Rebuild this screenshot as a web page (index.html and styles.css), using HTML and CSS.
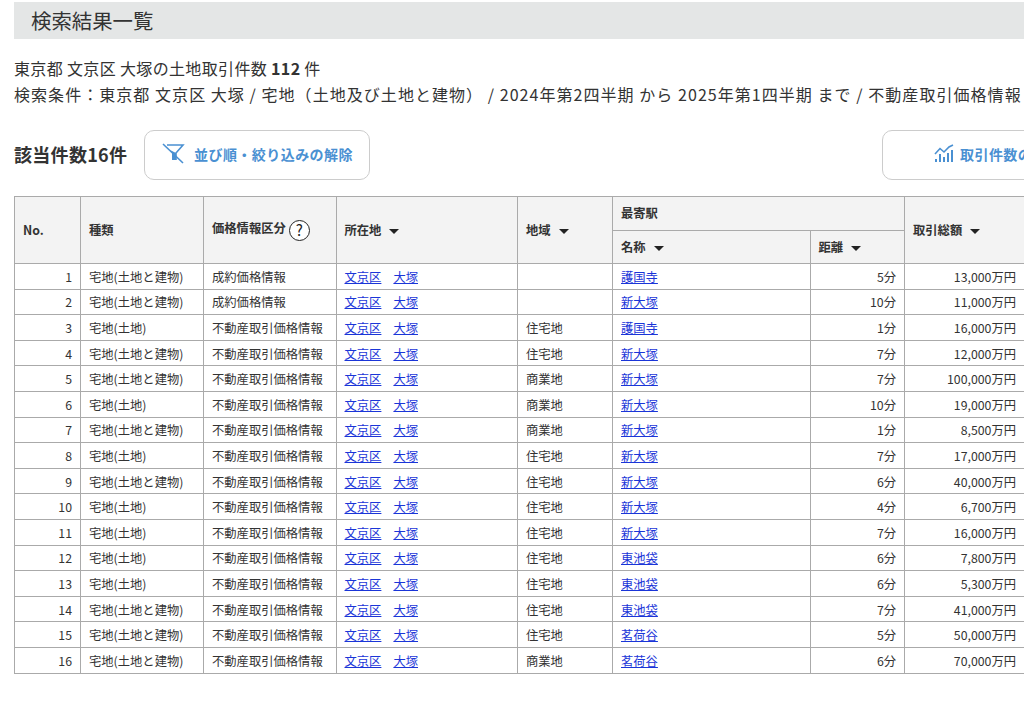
FILE: index.html
```html
<!DOCTYPE html>
<html lang="ja">
<head>
  <meta charset="UTF-8" />
  <title>検索結果一覧</title>
  <link rel="stylesheet" href="styles.css">
</head>
<body>
  <div class="page">
    <h2 class="title">検索結果一覧</h2>
    <div class="summary">
      <p class="summary-count">東京都 文京区 大塚の土地取引件数 <b>112</b> 件</p>
      <p class="summary-cond">検索条件：東京都 文京区 大塚 / 宅地（土地及び土地と建物） / 2024年第2四半期 から 2025年第1四半期 まで / 不動産取引価格情報</p>
    </div>
    <div class="toolbar">
      <span class="count">該当件数16件</span>
      <button class="btn btn-clear">
        <svg width="24" height="24" viewBox="0 0 24 24" fill="none" stroke="#4a90d2" stroke-width="1.6">
          <path d="M6 3H22L15 11V18"/>
          <path d="M9 8L11 11V18H15V11Z" fill="#4a90d2" stroke="none"/>
          <path d="M2 2L22 21"/>
        </svg>
        並び順・絞り込みの解除
      </button>
      <button class="btn btn-chart">
        <svg width="20" height="20" viewBox="0 0 20 20" fill="none" stroke="#4a90d2" stroke-width="1.6">
          <path d="M1 10L6 4.5L10 8L15 3L19 1"/>
          <path d="M2 18V15M6 18V10M10 18V13M14 18V9M18 18V6" stroke-width="2"/>
        </svg>
        取引件数の推移
      </button>
    </div>
    <table class="results">
      <colgroup>
        <col class="c-no"><col class="c-type"><col class="c-price"><col class="c-place">
        <col class="c-area"><col class="c-station"><col class="c-dist"><col class="c-total">
      </colgroup>
      <thead>
        <tr class="head-top">
          <th rowspan="2">No.</th>
          <th rowspan="2">種類</th>
          <th rowspan="2">価格情報区分<span class="help">?</span></th>
          <th rowspan="2">所在地<i class="sort"></i></th>
          <th rowspan="2">地域<i class="sort"></i></th>
          <th colspan="2">最寄駅</th>
          <th rowspan="2">取引総額<i class="sort"></i></th>
        </tr>
        <tr class="head-sub">
          <th>名称<i class="sort"></i></th>
          <th>距離<i class="sort"></i></th>
        </tr>
      </thead>
      <tbody>
        <tr><td class="num">1</td><td>宅地(土地と建物)</td><td>成約価格情報</td><td><a href="#">文京区</a><a href="#">大塚</a></td><td></td><td><a href="#">護国寺</a></td><td class="num">5分</td><td class="num">13,000万円</td></tr>
        <tr><td class="num">2</td><td>宅地(土地と建物)</td><td>成約価格情報</td><td><a href="#">文京区</a><a href="#">大塚</a></td><td></td><td><a href="#">新大塚</a></td><td class="num">10分</td><td class="num">11,000万円</td></tr>
        <tr><td class="num">3</td><td>宅地(土地)</td><td>不動産取引価格情報</td><td><a href="#">文京区</a><a href="#">大塚</a></td><td>住宅地</td><td><a href="#">護国寺</a></td><td class="num">1分</td><td class="num">16,000万円</td></tr>
        <tr><td class="num">4</td><td>宅地(土地と建物)</td><td>不動産取引価格情報</td><td><a href="#">文京区</a><a href="#">大塚</a></td><td>住宅地</td><td><a href="#">新大塚</a></td><td class="num">7分</td><td class="num">12,000万円</td></tr>
        <tr><td class="num">5</td><td>宅地(土地と建物)</td><td>不動産取引価格情報</td><td><a href="#">文京区</a><a href="#">大塚</a></td><td>商業地</td><td><a href="#">新大塚</a></td><td class="num">7分</td><td class="num">100,000万円</td></tr>
        <tr><td class="num">6</td><td>宅地(土地)</td><td>不動産取引価格情報</td><td><a href="#">文京区</a><a href="#">大塚</a></td><td>商業地</td><td><a href="#">新大塚</a></td><td class="num">10分</td><td class="num">19,000万円</td></tr>
        <tr><td class="num">7</td><td>宅地(土地と建物)</td><td>不動産取引価格情報</td><td><a href="#">文京区</a><a href="#">大塚</a></td><td>商業地</td><td><a href="#">新大塚</a></td><td class="num">1分</td><td class="num">8,500万円</td></tr>
        <tr><td class="num">8</td><td>宅地(土地)</td><td>不動産取引価格情報</td><td><a href="#">文京区</a><a href="#">大塚</a></td><td>住宅地</td><td><a href="#">新大塚</a></td><td class="num">7分</td><td class="num">17,000万円</td></tr>
        <tr><td class="num">9</td><td>宅地(土地と建物)</td><td>不動産取引価格情報</td><td><a href="#">文京区</a><a href="#">大塚</a></td><td>住宅地</td><td><a href="#">新大塚</a></td><td class="num">6分</td><td class="num">40,000万円</td></tr>
        <tr><td class="num">10</td><td>宅地(土地)</td><td>不動産取引価格情報</td><td><a href="#">文京区</a><a href="#">大塚</a></td><td>住宅地</td><td><a href="#">新大塚</a></td><td class="num">4分</td><td class="num">6,700万円</td></tr>
        <tr><td class="num">11</td><td>宅地(土地)</td><td>不動産取引価格情報</td><td><a href="#">文京区</a><a href="#">大塚</a></td><td>住宅地</td><td><a href="#">新大塚</a></td><td class="num">7分</td><td class="num">16,000万円</td></tr>
        <tr><td class="num">12</td><td>宅地(土地)</td><td>不動産取引価格情報</td><td><a href="#">文京区</a><a href="#">大塚</a></td><td>住宅地</td><td><a href="#">東池袋</a></td><td class="num">6分</td><td class="num">7,800万円</td></tr>
        <tr><td class="num">13</td><td>宅地(土地)</td><td>不動産取引価格情報</td><td><a href="#">文京区</a><a href="#">大塚</a></td><td>住宅地</td><td><a href="#">東池袋</a></td><td class="num">6分</td><td class="num">5,300万円</td></tr>
        <tr><td class="num">14</td><td>宅地(土地と建物)</td><td>不動産取引価格情報</td><td><a href="#">文京区</a><a href="#">大塚</a></td><td>住宅地</td><td><a href="#">東池袋</a></td><td class="num">7分</td><td class="num">41,000万円</td></tr>
        <tr><td class="num">15</td><td>宅地(土地と建物)</td><td>不動産取引価格情報</td><td><a href="#">文京区</a><a href="#">大塚</a></td><td>住宅地</td><td><a href="#">茗荷谷</a></td><td class="num">5分</td><td class="num">50,000万円</td></tr>
        <tr><td class="num">16</td><td>宅地(土地と建物)</td><td>不動産取引価格情報</td><td><a href="#">文京区</a><a href="#">大塚</a></td><td>商業地</td><td><a href="#">茗荷谷</a></td><td class="num">6分</td><td class="num">70,000万円</td></tr>
      </tbody>
    </table>
  </div>
</body>
</html>
```

FILE: styles.css
```css
html, body {
  margin: 0;
  height: 709px;
  overflow: hidden;
  background: #fff;
}
body {
  font-family: "Noto Sans CJK JP", "Noto Sans", sans-serif;
  color: #333;
}
.page {
  width: 1300px;
  padding: 2px 0 0 14px;
}
.title {
  margin: 0;
  height: 37px;
  padding-left: 17px;
  background: #e4e6e6;
  font-size: 20.4px;
  font-weight: 400;
  line-height: 37px;
}
.summary {
  margin-top: 16px;
  font-size: 16px;
  line-height: 26px;
}
.summary p {
  margin: 0;
  white-space: nowrap;
}
.summary-count {
  letter-spacing: 0.35px;
}
.summary-cond {
  letter-spacing: 1.05px;
}
.toolbar {
  display: flex;
  align-items: center;
  margin-top: 23px;
  height: 50px;
}
.count {
  width: 130px;
  padding-bottom: 2px;
  font-size: 18px;
  font-weight: 700;
  letter-spacing: 0.3px;
}
.btn {
  display: flex;
  align-items: center;
  height: 50px;
  background: #fff;
  border: 1px solid #ccc;
  border-radius: 10px;
  color: #4a90d2;
  font-family: inherit;
  font-size: 14px;
  font-weight: 700;
  letter-spacing: 0.45px;
}
.btn-clear {
  width: 226px;
  padding: 0 0 2px 16px;
  gap: 9px;
}
.btn-chart {
  width: 226px;
  margin-left: 512px;
  padding: 0 0 2px 51px;
  gap: 6px;
}
.results {
  margin-top: 16px;
  width: 1010px;
  table-layout: fixed;
  border-collapse: collapse;
  font-size: 12.3px;
}
.c-no { width: 66px; }
.c-type { width: 123px; }
.c-price { width: 132.5px; }
.c-place { width: 181.5px; }
.c-area { width: 95px; }
.c-station { width: 197.5px; }
.c-dist { width: 94.5px; }
.c-total { width: 120px; }
th, td {
  border: 1px solid #aaa;
  padding: 0 8px;
  white-space: nowrap;
  overflow: hidden;
}
td {
  padding-top: 1px;
}
th {
  background: #f3f3f3;
  text-align: left;
  font-weight: 700;
}
.head-top, .head-sub {
  height: 33.5px;
}
tbody tr {
  height: 25.6px;
}
.num {
  text-align: right;
}
td a {
  color: #1a35d8;
  margin-right: 12px;
}
.sort {
  display: inline-block;
  width: 0;
  height: 0;
  margin-left: 8px;
  vertical-align: middle;
  border-style: solid;
  border-width: 5px 5px 0;
  border-color: #222 transparent transparent;
}
.help {
  display: inline-block;
  box-sizing: border-box;
  width: 21px;
  height: 21px;
  margin-left: 3px;
  border: 1.5px solid #222;
  border-radius: 50%;
  background: #fff;
  color: #222;
  font-size: 15px;
  font-weight: 400;
  line-height: 18px;
  text-align: center;
  vertical-align: middle;
}
```
